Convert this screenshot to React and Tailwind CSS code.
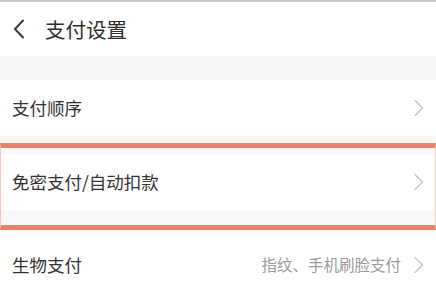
import React from "react";

const Chevron = () => (
  <svg width="12" height="18" viewBox="0 0 12 18" fill="none" className="shrink-0">
    <path d="M2 1.5 L9.5 9 L2 16.5" stroke="#c4c4c4" strokeWidth="1.4" strokeLinecap="round" strokeLinejoin="round" />
  </svg>
);

export default function App() {
  return (
    <div
      className="w-[436px] h-[282px] overflow-hidden bg-white flex flex-col"
      style={{ fontFamily: '"Noto Sans CJK SC", "Noto Sans", sans-serif' }}
    >
      <div className="h-[2px] shrink-0 bg-[#c9c9c9]" />
      <div className="h-[54px] shrink-0 flex items-center bg-white">
        <svg width="14" height="20" viewBox="0 0 14 20" fill="none" className="ml-[12px]">
          <path d="M11 1.5 L3 10 L11 18.5" stroke="#3a3a3a" strokeWidth="2" strokeLinecap="round" strokeLinejoin="round" />
        </svg>
        <span className="ml-[19px] text-[20.5px] leading-none text-[#2e2e2e]">支付设置</span>
      </div>
      <div className="h-[24px] shrink-0 bg-[#f4f4f4]" />
      <div className="h-[56px] shrink-0 flex items-center justify-between pl-[12px] pr-[11px] bg-white">
        <span className="text-[17.5px] leading-none text-[#333]">支付顺序</span>
        <Chevron />
      </div>
      <div className="h-[7px] shrink-0 bg-[#f6f6f6]" />
      <div className="shrink-0 border-y-[5px] border-x border-y-[#e8836b] border-x-[#f4c9bd] flex flex-col">
        <div className="h-[6px] bg-[#f8f8f8]" />
        <div className="h-[56px] flex items-center justify-between pl-[11px] pr-[10px] bg-white">
          <span className="text-[17.5px] leading-none text-[#333]">免密支付/自动扣款</span>
          <Chevron />
        </div>
        <div className="h-[15px] bg-[#f8f8f8]" />
      </div>
      <div className="h-[70px] shrink-0 flex items-center justify-between pl-[12px] pr-[11px] bg-white">
        <span className="text-[17.5px] leading-none text-[#333]">生物支付</span>
        <div className="flex items-center gap-[12px]">
          <span className="text-[15.5px] leading-none text-[#9a9a9a]">指纹、手机刷脸支付</span>
          <Chevron />
        </div>
      </div>
    </div>
  );
}
